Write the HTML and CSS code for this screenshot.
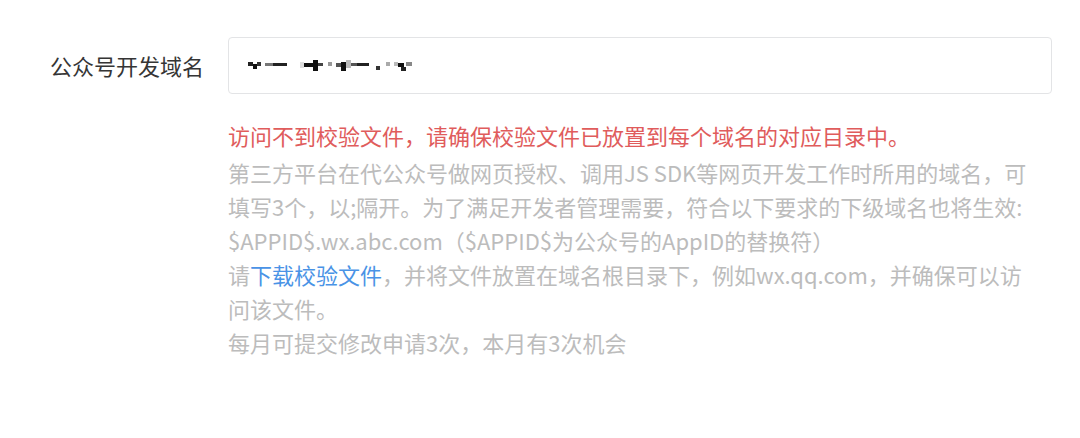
FILE: index.html
```html
<!DOCTYPE html>
<html>
<head>
  <meta charset="utf-8">
  <title>公众号开发域名</title>
  <link rel="stylesheet" href="styles.css">
</head>
<body>
<div class="formRow">
  <label class="formLabel">公众号开发域名</label>
  <div class="formControl">
    <div class="inputBox">
      <!-- mosaic of the hidden domain -->
      <svg class="mosaic" width="190" height="14" viewBox="0 0 190 14">
        <rect x="0" y="2" width="5" height="4" fill="#222"/>
        <rect x="5" y="4" width="4" height="5" fill="#111"/>
        <rect x="9" y="2" width="4" height="4" fill="#333"/>
        <rect x="17" y="3" width="8" height="3" fill="#777"/>
        <rect x="25" y="3" width="14" height="3" fill="#222"/>
        <rect x="52" y="2" width="4" height="6" fill="#ddd"/>
        <rect x="56" y="3" width="9" height="4" fill="#111"/>
        <rect x="65" y="0" width="5" height="11" fill="#111"/>
        <rect x="70" y="3" width="5" height="3" fill="#444"/>
        <rect x="80" y="2" width="4" height="4" fill="#999"/>
        <rect x="88" y="3" width="5" height="4" fill="#555"/>
        <rect x="93" y="2" width="5" height="9" fill="#111"/>
        <rect x="98" y="0" width="5" height="8" fill="#bbb"/>
        <rect x="103" y="3" width="6" height="3" fill="#555"/>
        <rect x="109" y="3" width="12" height="3" fill="#222"/>
        <rect x="128" y="6" width="4" height="4" fill="#333"/>
        <rect x="138" y="2" width="4" height="4" fill="#aaa"/>
        <rect x="146" y="2" width="4" height="4" fill="#bbb"/>
        <rect x="150" y="3" width="6" height="4" fill="#111"/>
        <rect x="153" y="7" width="5" height="4" fill="#222"/>
        <rect x="158" y="2" width="6" height="4" fill="#888"/>
      </svg>
    </div>
    <div class="errorTip">访问不到校验文件，请确保校验文件已放置到每个域名的对应目录中。</div>
    <div class="helpText">
      <p>第三方平台在代公众号做网页授权、调用JS SDK等网页开发工作时所用的域名，可填写3个，以;隔开。为了满足开发者管理需要，符合以下要求的下级域名也将生效:<wbr>$APPID$.wx.abc.com（$APPID$为公众号的AppID的替换符）</p>
      <p>请<a href="#" class="link">下载校验文件</a>，并将文件放置在域名根目录下，例如wx.qq.com，并确保可以访问该文件。</p>
      <p>每月可提交修改申请3次，本月有3次机会</p>
    </div>
  </div>
</div>
</body>
</html>
```

FILE: styles.css
```css
body {
    margin: 0;
    background: #fff;
    font-family: "Noto Sans CJK SC", "Noto Sans", sans-serif;
}
.formRow {
    display: flex;
    padding: 37px 0 0 50px;
    gap: 24px;
}
.formLabel {
    font-size: 22px;
    line-height: 57px;
    color: #353535;
    white-space: nowrap;
}
.formControl {
    width: 824px;
}
.inputBox {
    box-sizing: border-box;
    height: 57px;
    border: 1px solid #e3e4e6;
    border-radius: 4px;
    display: flex;
    align-items: center;
    padding-left: 19px;
}
.mosaic {
    display: block;
    margin-top: 2px;
}
.errorTip {
    margin-top: 24px;
    font-size: 22px;
    line-height: 34px;
    color: #e05c5c;
}
.helpText {
    margin-top: 3px;
    font-size: 22px;
    line-height: 34px;
    color: #bcbcbc;
    width: 812px;
}
.helpText p {
    margin: 0;
}
.link {
    color: #4a93e6;
    text-decoration: none;
}
```
